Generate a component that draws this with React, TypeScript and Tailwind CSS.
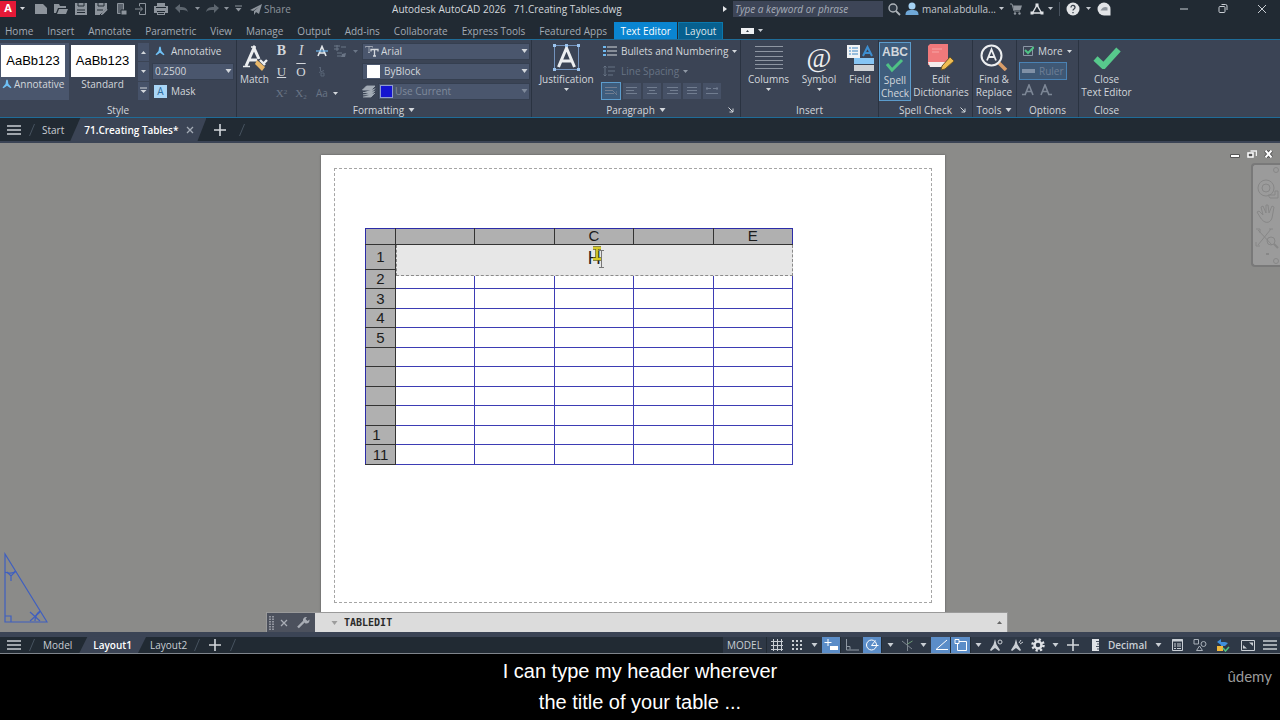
import React from "react";
import clsx from "clsx";

const menuTabs = [
  "Home",
  "Insert",
  "Annotate",
  "Parametric",
  "View",
  "Manage",
  "Output",
  "Add-ins",
  "Collaborate",
  "Express Tools",
  "Featured Apps",
];

const columns = ["", "", "C", "", "E"];
const rows = ["2", "3", "4", "5", "", "", "", "", "1  ", "11"];

type IconProps = {
  w?: number;
  h?: number;
  className?: string;
  children: React.ReactNode;
};

const Icon = ({ w = 16, h = 16, className, children }: IconProps) => (
  <svg
    width={w}
    height={h}
    viewBox={`0 0 ${w} ${h}`}
    fill="none"
    stroke="currentColor"
    className={clsx("shrink-0", className)}
    aria-hidden="true"
  >
    {children}
  </svg>
);

const Caret = ({ className }: { className?: string }) => (
  <Icon w={7} h={4} className={className}>
    <path d="M0.5 0h6L3.5 4z" fill="currentColor" stroke="none" />
  </Icon>
);

const SmallCaret = ({ className }: { className?: string }) => (
  <Icon w={5} h={3} className={className}>
    <path d="M0 0h5L2.5 3z" fill="currentColor" stroke="none" />
  </Icon>
);

const Slash = () => (
  <Icon w={8} h={14} className="text-[#46525f]">
    <path d="M1.5 13L6.5 1" />
  </Icon>
);

const Burger = () => (
  <Icon w={14} h={12} className="text-[#c9ced4]">
    <path d="M0 2h14M0 6h14M0 10h14" strokeWidth="1.6" />
  </Icon>
);

const Plus = () => (
  <Icon w={12} h={12} className="text-[#d3d7dc]">
    <path d="M6 0v12M0 6h12" strokeWidth="1.6" />
  </Icon>
);

const AnnoIcon = ({ className }: { className?: string }) => (
  <Icon w={10} h={10} className={className}>
    <path
      d="M5 0.5C6.2 0.5 6 3.5 6.5 5L9.5 8.5 8.5 9.2 5 6.8 1.5 9.2 0.5 8.5 3.5 5C4 3.5 3.8 0.5 5 0.5z"
      fill="currentColor"
      stroke="none"
    />
  </Icon>
);

type PanelProps = {
  title: string;
  className: string;
  caret?: boolean;
  launcher?: boolean;
  children: React.ReactNode;
};

const Panel = ({ title, className, caret, launcher, children }: PanelProps) => (
  <section
    className={clsx(
      "flex shrink-0 flex-col border-r border-[#2a3341]",
      className
    )}
  >
    <div className="flex h-16 pt-px">{children}</div>
    <div className="flex h-3 items-center leading-3">
      {launcher && <span className="w-3" />}
      <h2 className="flex flex-1 items-center justify-center gap-1">
        {title}
        {caret && <Caret />}
      </h2>
      {launcher && (
        <button className="w-3" aria-label={`${title} settings`}>
          <Icon w={6} h={6}>
            <path d="M0.5 0.5L5 5M5 1.5V5H1.5" />
          </Icon>
        </button>
      )}
    </div>
  </section>
);

type BigButtonProps = {
  className: string;
  lines: string[];
  caret?: boolean;
  children: React.ReactNode;
};

const BigButton = ({ className, lines, caret, children }: BigButtonProps) => (
  <button
    className={clsx(
      "flex h-[59px] shrink-0 flex-col items-center pt-px leading-[13px]",
      className
    )}
  >
    <span className="flex h-[31px] items-center">{children}</span>
    {lines.map((line) => (
      <span key={line} className="whitespace-nowrap">
        {line}
      </span>
    ))}
    {caret && <SmallCaret className="mt-0.5" />}
  </button>
);

type SelectBoxProps = {
  label: string;
  value: string;
  className?: string;
  children?: React.ReactNode;
};

const SelectBox = ({ label, value, className, children }: SelectBoxProps) => (
  <label
    className={clsx(
      "flex h-[17px] items-center border border-[#353f50] bg-[#4a566d] pr-px",
      className
    )}
  >
    {children}
    <select
      aria-label={label}
      className="min-w-0 flex-1 appearance-none bg-transparent pl-0.5 outline-none"
    >
      <option>{value}</option>
    </select>
    <Caret />
  </label>
);

const TitleBar = () => (
  <header className="flex h-[18px] items-center pb-px text-[#8d949c]">
    <button
      aria-label="Application menu"
      className="flex h-4 w-4 items-start bg-[#e51937] text-[11px] leading-[14px] font-bold text-white"
    >
      <span className="w-full text-center">A</span>
    </button>
    <SmallCaret className="ml-1 text-[#d3d7dc]" />
    <div className="ml-2 flex items-center gap-1">
      <Icon>
        <path d="M2 3h8l4 4v6H2z" fill="currentColor" stroke="none" />
      </Icon>
      <Icon>
        <path
          d="M1 3h5l1 2h6v2H5L3 12H1zM6 8h9l-2 5H4z"
          fill="currentColor"
          stroke="none"
        />
      </Icon>
      <Icon>
        <path d="M2 2h12v12H2z" fill="currentColor" stroke="none" />
        <path d="M5 2v3h6V2M4 9h8M4 11.5h8" stroke="#212a33" />
      </Icon>
      <Icon>
        <path d="M2 2h12v6l-5 6H2z" fill="currentColor" stroke="none" />
        <path d="M5 2v3h6V2M4 9h6M7 14l6-6" stroke="#212a33" />
        <path d="M9 13l5-5" strokeWidth="2" />
      </Icon>
      <Icon>
        <path d="M4.5 2.5h6v10h-6z" fill="#59616b" />
        <path d="M8 9h6v5H8z" fill="currentColor" stroke="#212a33" />
      </Icon>
      <Icon>
        <path d="M6.5 5V2.5h6v11h-6V11M2 8h7M7 5.5L9.5 8 7 10.5" />
      </Icon>
      <Icon>
        <path
          d="M4 2h8v3h3v7h-3v2H4v-2H1V5h3z"
          fill="currentColor"
          stroke="none"
        />
        <path d="M3 6.5h10M4 10.5h8M5 12.5h6" stroke="#212a33" />
      </Icon>
    </div>
    <Icon w={14} h={10} className="ml-1.5 text-[#5d666f]">
      <path d="M0 4l5-4v3c5 0 7 1 8 5-2-2-4-2-8-2v3z" fill="currentColor" stroke="none" />
    </Icon>
    <SmallCaret className="ml-1.5" />
    <Icon w={14} h={10} className="ml-1.5 text-[#5d666f]">
      <path d="M13 4L8 0v3C3 3 1 4 0 8c2-2 4-2 8-2v3z" fill="currentColor" stroke="none" />
    </Icon>
    <SmallCaret className="ml-1" />
    <Icon w={7} h={7} className="ml-1.5">
      <path d="M0 1h7" />
      <path d="M0.5 3h6L3.5 6.5z" fill="currentColor" stroke="none" />
    </Icon>
    <button className="ml-2 flex items-center gap-0.5 leading-4">
      <Icon w={12} h={12}>
        <path d="M0 7L12 1 9 11 6 9 4 12V8l5-4-6 4z" fill="currentColor" stroke="none" />
      </Icon>
      Share
    </button>
    <h1 className="flex flex-1 justify-center gap-2 text-[#d3d7dc]">
      <span>Autodesk AutoCAD 2026</span>
      <span>71.Creating Tables.dwg</span>
    </h1>
    <Icon w={4} h={6} className="mr-1.5 text-[#e4e6e9]">
      <path d="M0 0l4 3-4 3z" fill="currentColor" stroke="none" />
    </Icon>
    <input
      aria-label="Search"
      placeholder="Type a keyword or phrase"
      className="h-4 w-[150px] bg-[#3d4557] px-0.5 italic outline-none placeholder:text-[#a7adb8]"
    />
    <Icon w={14} h={14} className="ml-1 text-[#aeb4ba]">
      <circle cx="6" cy="6" r="4" fill="#2f3944" strokeWidth="1.4" />
      <path d="M9 9l4 4" strokeWidth="1.8" />
    </Icon>
    <button className="ml-1 flex items-center gap-[3px] text-[#c3c8ce]">
      <Icon w={14} h={13}>
        <circle cx="7" cy="4" r="3.5" fill="#a5d3f5" stroke="none" />
        <path d="M0.5 13c0-4 2-5 6.5-5s6.5 1 6.5 5z" fill="#6fa8d8" stroke="none" />
      </Icon>
      manal.abdulla...
      <SmallCaret />
    </button>
    <Icon w={12} h={12} className="ml-1.5">
      <path d="M0 1h2l2 7h6" />
      <path d="M3 2.5h9L10.5 7H4z" fill="currentColor" stroke="none" />
      <circle cx="5" cy="10.5" r="1.2" fill="currentColor" stroke="none" />
      <circle cx="9.5" cy="10.5" r="1.2" fill="currentColor" stroke="none" />
    </Icon>
    <Icon w={14} h={12} className="ml-2 text-[#dfe2e6]">
      <path d="M7 2L2.5 10h9z" strokeWidth="1.4" />
      <path d="M5.5 0.5h3v3h-3zM0.5 8.5h3v3h-3zM10.5 8.5h3v3h-3z" fill="currentColor" stroke="none" />
    </Icon>
    <SmallCaret className="ml-1 text-[#c3c8ce]" />
    <span className="mx-1.5 h-3.5 w-px bg-[#48525e]" />
    <button aria-label="Help">
      <Icon w={14} h={14}>
        <circle cx="7" cy="7" r="6.5" fill="#e2e4e7" stroke="none" />
        <path d="M5 5.5c0-3 4-2.5 4 0C9 7 7 7 7 8.5M7 10v1.2" stroke="#3a424c" strokeWidth="1.3" />
      </Icon>
    </button>
    <SmallCaret className="ml-1.5 text-[#c3c8ce]" />
    <Icon w={14} h={14} className="ml-1.5">
      <path d="M7 0.5a6.5 6.5 0 016.5 6.5v6.5H7A6.5 6.5 0 017 0.5z" fill="#e2e4e7" stroke="none" />
      <path d="M3.5 8.5c2-4 5-4 7-3v3z" fill="#8d949c" stroke="none" />
    </Icon>
    <div className="mr-3 ml-17 flex items-center gap-7 text-[#c9ced4]">
      <button aria-label="Minimize">
        <Icon w={11} h={10}>
          <path d="M1 5h8" />
        </Icon>
      </button>
      <button aria-label="Restore">
        <Icon w={11} h={10}>
          <rect x="1" y="2.5" width="6" height="6" rx="1" />
          <path d="M3.5 0.5H7.5a1.5 1.5 0 011.5 1.5V6" />
        </Icon>
      </button>
      <button aria-label="Close">
        <Icon w={11} h={10}>
          <path d="M1 1l8 8M9 1L1 9" />
        </Icon>
      </button>
    </div>
  </header>
);

const MenuTabs = () => (
  <nav className="flex h-[21px] items-end text-[#a3abb5]">
    <div className="flex h-[17px] items-center gap-3.5 pr-[7px] pl-[5px]">
      {menuTabs.map((tab) => (
        <button key={tab}>{tab}</button>
      ))}
    </div>
    <button className="h-[17px] w-[63px] bg-[#0a85d1] text-white">
      Text Editor
    </button>
    <button className="ml-px h-[17px] w-[45px] border border-b-0 border-[#0a78ad] bg-[#07608f] text-[#dfe6ec]">
      Layout
    </button>
    <button
      aria-label="Ribbon display"
      className="ml-4.5 flex h-[17px] items-center gap-1 text-[#c9ced4]"
    >
      <Icon w={13} h={6}>
        <path d="M0 0h13v6H0z" fill="#eef0f2" stroke="none" />
        <path d="M5 4h3L6.5 2z" fill="#333c47" stroke="none" />
      </Icon>
      <SmallCaret />
    </button>
  </nav>
);

const StylePanel = () => (
  <Panel title="Style" className="w-[237px]">
    <button className="mt-0.5 flex h-[57px] w-[69px] flex-col bg-[#4a566d] pt-0.5 leading-[14px]">
      <span className="ml-px flex h-8 w-16 items-center justify-center bg-white font-['Liberation_Sans',sans-serif] text-[13px] text-black">
        AaBb123
      </span>
      <span className="flex items-center gap-0.5 pl-0.5">
        <AnnoIcon className="text-[#6fc0f5]" />
        Annotative
      </span>
    </button>
    <button className="mt-0.5 flex h-[57px] w-[67px] flex-col items-center pt-0.5 leading-[14px]">
      <span className="flex h-8 w-16 items-center justify-center bg-white font-['Liberation_Sans',sans-serif] text-[13px] text-black">
        AaBb123
      </span>
      Standard
    </button>
    <div className="mt-0.5 ml-0.5 flex h-[57px] w-[11px] flex-col gap-px">
      <button
        aria-label="Previous style"
        className="flex flex-1 items-center justify-center bg-[#465269]"
      >
        <SmallCaret className="rotate-180" />
      </button>
      <button
        aria-label="Next style"
        className="flex flex-1 items-center justify-center bg-[#465269]"
      >
        <SmallCaret />
      </button>
      <button
        aria-label="All styles"
        className="flex flex-1 items-center justify-center bg-[#465269]"
      >
        <Icon w={7} h={7}>
          <path d="M0 1h7" />
          <path d="M0.5 3h6L3.5 6z" fill="currentColor" stroke="none" />
        </Icon>
      </button>
    </div>
    <div className="ml-[3px] flex w-[82px] flex-col">
      <button className="flex h-5 items-center gap-1.5 pl-[3px]">
        <AnnoIcon className="text-[#6fc0f5]" />
        Annotative
      </button>
      <div className="flex h-5 items-center">
        <SelectBox label="Text height" value="0.2500" className="w-full" />
      </div>
      <button className="flex h-5 items-center gap-1 pl-0.5">
        <span className="flex size-[13px] items-center justify-center bg-[#a9d6f7] text-[#2c6a9c]">
          A
        </span>
        Mask
      </button>
    </div>
  </Panel>
);

const FormattingPanel = () => (
  <Panel title="Formatting" className="w-[295px]" caret>
    <BigButton className="w-[35px]" lines={["Match"]}>
      <Icon w={26} h={26} className="text-[#eceef0]">
        <path d="M4 21L12 3l5 11M7 15h8" strokeWidth="3" />
        <path d="M1 21.5h7M9 2h5" strokeWidth="1.5" />
        <path d="M15 15l8 7-3 4-7-7z" fill="#e8b668" stroke="none" />
        <path d="M18 15l5 5M22 18l3-3" strokeWidth="2.4" />
      </Icon>
    </BigButton>
    <div className="grid w-[90px] grid-cols-[19px_20px_22px_29px] grid-rows-3 font-['Liberation_Serif',serif] text-[14px] *:h-5 *:leading-5">
      <button className="font-bold">B</button>
      <button className="italic">I</button>
      <button aria-label="Strikethrough" className="flex items-center justify-center">
        <Icon w={12} h={12} className="text-[#e4e7ea]">
          <path d="M2 11L6 1.5 10 11M3.5 8h5" strokeWidth="1.6" />
          <path d="M0 6h12" stroke="#6fb8ee" strokeWidth="1.2" />
        </Icon>
      </button>
      <button aria-label="Match paragraph" className="flex items-center gap-1.5 text-[#6b7687]">
        <Icon w={14} h={14}>
          <path d="M1 2h6M1 5h5M4 1v6M8 3h5M4 9h5M4 12h4" />
          <path d="M9 10l4-1-1 4H8z" fill="currentColor" stroke="none" />
        </Icon>
        <SmallCaret />
      </button>
      <button className="text-[13px] underline">U</button>
      <button className="text-[13px] overline">O</button>
      <button aria-label="Stack" className="flex items-center justify-center text-[#596577]">
        <Icon w={8} h={10}>
          <path d="M2.5 0v4M1 1L2.5 0M3 6h3v3H3zM1 5.5l5-2" />
        </Icon>
      </button>
      <span />
      <button className="text-[11px] text-[#697485]">
        X<sup className="text-[7px]">2</sup>
      </button>
      <button className="text-[11px] text-[#697485]">
        X<sub className="text-[7px]">2</sub>
      </button>
      <button className="font-['Open_Sans',sans-serif] text-[10px] text-[#697485]">
        Aa
      </button>
      <span className="flex items-center">
        <SmallCaret />
      </span>
    </div>
    <div className="flex w-[168px] flex-col *:flex *:h-5 *:items-center">
      <div>
        <SelectBox label="Font" value="Arial" className="w-full">
          <Icon w={14} h={12} className="ml-0.5">
            <path d="M0.5 2.5v-1h7v1M4 1.5v6M3 7.5h2" strokeOpacity="0.6" />
            <path d="M6 6.5v-2h7v2M9.5 4.5v6.5M8 11h3" strokeWidth="1.3" />
          </Icon>
        </SelectBox>
      </div>
      <div>
        <SelectBox label="Color" value="ByBlock" className="w-full">
          <span className="mr-0.5 ml-1 size-[13px] bg-white" />
        </SelectBox>
      </div>
      <div className="text-[#7f8a9b]">
        <Icon w={14} h={13} className="mr-0.5">
          <path d="M4.5 1h8.500l-4 4H0.5zM1 7.5h8l4-4M1 9.8h8l4-4M1 12h8l4-4" fill="#a3abb5" stroke="#a3abb5" strokeWidth="0.9" />
        </Icon>
        <SelectBox label="Layer" value="Use Current" className="flex-1">
          <span className="ml-px size-[13px] shrink-0 border border-[#8f9bd0] bg-[#1414d0]" />
        </SelectBox>
      </div>
    </div>
  </Panel>
);

const ParagraphPanel = () => (
  <Panel title="Paragraph" className="w-[209px]" caret launcher>
    <BigButton className="w-[69px]" lines={["Justification"]} caret>
      <Icon w={27} h={27} className="text-[#eceef0]">
        <path d="M1.5 1.5h24v24h-24z" stroke="#7393bd" />
        <path d="M5.5 23L13.5 4l8 19M8.5 17h10" strokeWidth="3" />
        <path d="M0 0h3v3H0zM24 0h3v3h-3zM0 24h3v3H0zM24 24h3v3h-3zM12 0h3v3h-3z" fill="#9cc4ee" stroke="none" />
      </Icon>
    </BigButton>
    <div className="flex flex-1 flex-col">
      <button className="flex h-5 items-center gap-1 pl-0.5 whitespace-nowrap">
        <Icon w={14} h={12}>
          <path d="M4 2h10M4 6h10M4 10h10" />
          <path d="M0 1h3v2H0zM0 5h3v2H0zM0 9h3v2H0z" fill="#6fb8ee" stroke="none" />
        </Icon>
        Bullets and Numbering
        <SmallCaret />
      </button>
      <button className="flex h-5 items-center gap-1 pl-0.5 text-[#677384]">
        <Icon w={14} h={12}>
          <path d="M5 2h7M5 6h7M5 10h5M2 1v10M0.5 2.5L2 1l1.5 1.5M0.5 9.5L2 11l1.5-1.5" />
        </Icon>
        Line Spacing
        <SmallCaret className="text-[#8f98a5]" />
      </button>
      <div className="flex h-5 items-center gap-0.5 text-[#717d90]">
        <button aria-label="Default" className="flex h-[18px] w-5 items-center justify-center border border-[#5c9ccc] bg-[#3e5c7c]">
          <Icon w={12} h={10}>
            <path d="M0 1.5h12M0 4.5h8M0 7.5h9M8 5l4 4M12 5v4" />
          </Icon>
        </button>
        <button aria-label="Left" className="flex h-4 w-[18px] items-center justify-center bg-[#465166]">
          <Icon w={12} h={10}>
            <path d="M0 1.5h11M0 4.5h8M0 7.5h11" />
          </Icon>
        </button>
        <button aria-label="Center" className="flex h-4 w-[18px] items-center justify-center bg-[#465166]">
          <Icon w={12} h={10}>
            <path d="M1 1.5h10M3 4.5h6M1 7.5h10" />
          </Icon>
        </button>
        <button aria-label="Right" className="flex h-4 w-[18px] items-center justify-center bg-[#465166]">
          <Icon w={12} h={10}>
            <path d="M1 1.5h11M4 4.5h8M1 7.5h11" />
          </Icon>
        </button>
        <button aria-label="Justify" className="flex h-4 w-[18px] items-center justify-center bg-[#465166]">
          <Icon w={12} h={10}>
            <path d="M1 1.5h10M1 4.5h10M1 7.5h10" />
          </Icon>
        </button>
        <button aria-label="Distribute" className="flex h-4 w-[18px] items-center justify-center bg-[#465166]">
          <Icon w={14} h={10}>
            <path d="M1 2.5h5M8 2.5h5M1 7.5h12M2 1v3M12 1v3" />
          </Icon>
        </button>
      </div>
    </div>
  </Panel>
);

const Ribbon = () => (
  <div className="flex h-[79px] overflow-hidden border-y border-[#1f6c98] bg-[#3b4455]">
    <StylePanel />
    <FormattingPanel />
    <ParagraphPanel />
    <Panel title="Insert" className="w-[138px]">
      <BigButton className="w-[55px]" lines={["Columns"]} caret>
        <Icon w={28} h={26} className="text-[#8e96a2]">
          <path d="M0 1.5h28M0 6.5h28M0 11.5h28M0 15.5h28M0 19.5h28M0 23.5h28" />
        </Icon>
      </BigButton>
      <BigButton className="w-[46px]" lines={["Symbol"]} caret>
        <span className="font-['Liberation_Serif',serif] text-[27px] leading-7 text-[#eceef0]">
          @
        </span>
      </BigButton>
      <BigButton className="w-[36px]" lines={["Field"]}>
        <Icon w={27} h={26}>
          <path d="M0 0h13v13H0z" fill="#f1f3f5" stroke="none" />
          <path d="M2 3h2M2 6h2M2 9h2M5 3h6M5 6h6M5 9h6" stroke="#3d86c4" />
          <path d="M16 11l4.5-9L25 11M17.5 8h6" stroke="#3d8ed0" strokeWidth="2" />
          <path d="M7 13h20v6H7z" fill="#86c5f4" stroke="none" />
          <path d="M7 20h20v6H7z" fill="#cfd2d5" stroke="none" />
        </Icon>
      </BigButton>
    </Panel>
    <Panel title="Spell Check" className="w-[94px]" launcher>
      <BigButton
        className="mt-px border border-[#5c9ccc] bg-[#3f5d7d] w-8"
        lines={["Spell", "Check"]}
      >
        <span className="flex flex-col items-center font-['Liberation_Sans',sans-serif] text-[12px] leading-3 font-bold">
          ABC
          <Icon w={20} h={15}>
            <path d="M2 6l5 6L17 2" stroke="#4fc285" strokeWidth="3" />
          </Icon>
        </span>
      </BigButton>
      <BigButton className="w-[60px]" lines={["Edit", "Dictionaries"]}>
        <Icon w={28} h={27}>
          <path d="M1 2l2-2h18v21H1z" fill="#f0797b" stroke="none" />
          <path d="M5 5h10M5 8h7" stroke="#f7a6a6" />
          <path d="M1 18h17v5H3z" fill="#f4eded" stroke="none" />
          <path d="M15 22l8-9 4 4-9 8-4 1z" fill="#f0bd52" stroke="#6b5526" />
        </Icon>
      </BigButton>
    </Panel>
    <Panel title="Tools" className="w-[44px]" caret>
      <BigButton className="w-[42px]" lines={["Find &", "Replace"]}>
        <Icon w={28} h={27} className="text-[#eceef0]">
          <path d="M19 19l7 7" stroke="#d99d68" strokeWidth="3.5" />
          <circle cx="11.5" cy="11.5" r="10" strokeWidth="2" />
          <path d="M7 16.5l4.5-11 4.5 11M8.5 13h6" strokeWidth="1.8" />
        </Icon>
      </BigButton>
    </Panel>
    <Panel title="Options" className="w-[62px]">
      <div className="flex w-full flex-col pl-0.5">
        <button className="flex h-5 items-center gap-1 pl-[3px]">
          <Icon w={12} h={12}>
            <path d="M1.5 1.5h9v9h-9z" stroke="#8b96a5" />
            <path d="M3 5l3 3 6-6" stroke="#4fc285" strokeWidth="2" />
          </Icon>
          More
          <SmallCaret />
        </button>
        <button className="mt-px flex h-[18px] w-[48px] items-center gap-1 border border-[#4a82b4] bg-[#3f5875] pl-0.5 text-[#6f7f95]">
          <Icon w={13} h={6}>
            <path d="M0 1h13v4H0z" fill="#8090a6" stroke="none" />
          </Icon>
          Ruler
        </button>
        <div className="flex h-5 items-center gap-1.5 pl-[3px] text-[#7d8796]">
          <Icon w={12} h={12}>
            <path d="M3 11l4-10 4 10M4.5 7.5h5M0 10.5h4" strokeWidth="1.6" />
          </Icon>
          <Icon w={12} h={12}>
            <path d="M1 11L5 1l4 10M2.5 7.5h5M8 10.5h4" strokeWidth="1.6" />
          </Icon>
        </div>
      </div>
    </Panel>
    <Panel title="Close" className="w-[55px] border-r-0">
      <BigButton className="w-[55px]" lines={["Close", "Text Editor"]}>
        <Icon w={28} h={22}>
          <path d="M2.5 11.5l8 7.5L25.5 2.5" stroke="#57c98c" strokeWidth="6" />
        </Icon>
      </BigButton>
    </Panel>
  </div>
);

const FileTabs = () => (
  <nav className="flex h-[25px] items-stretch border-b-2 border-[#3b4455] text-[#c9ced4]">
    <button aria-label="Files" className="flex w-7 items-center justify-center">
      <Burger />
    </button>
    <div className="flex items-center">
      <Slash />
    </div>
    <button className="px-1.5">Start</button>
    <div className="flex items-center gap-2 bg-[#3b4455] pr-3 pl-3.5 text-white [clip-path:polygon(10px_0,100%_0,calc(100%-9px)_100%,0_100%)]">
      <button className="font-semibold">71.Creating Tables*</button>
      <button aria-label="Close drawing" className="text-[#a3abb5]">
        <Icon w={8} h={8}>
          <path d="M1 1l6 6M7 1L1 7" strokeWidth="1.3" />
        </Icon>
      </button>
    </div>
    <button aria-label="New drawing" className="px-2">
      <Plus />
    </button>
    <div className="flex items-center pl-1">
      <Slash />
    </div>
  </nav>
);

const DrawingTable = () => (
  <table className="mt-[59px] ml-[30px] w-[428px] table-fixed border-collapse text-center font-['Liberation_Sans',sans-serif] text-[15px] leading-[15px] text-[#1c1c1c]">
    <thead>
      <tr className="h-4 bg-[#b0b0b0] leading-[14px]">
        <th className="w-[30px] border border-[#333] border-t-[#2c2ca8] border-l-[#2c2ca8]" />
        {columns.map((name, i) => (
          <th
            key={i}
            className="border border-[#333] border-t-[#2c2ca8] p-0 pb-px font-normal last:border-r-[#2c2ca8]"
          >
            {name}
          </th>
        ))}
      </tr>
    </thead>
    <tbody>
      <tr className="h-[25px]">
        <th className="border border-[#333] border-l-[#2c2ca8] bg-[#b0b0b0] p-0 pb-0.5 font-normal">
          1
        </th>
        <td colSpan={5} className="relative p-0">
          {/* in-place editor, taller than the cell it edits */}
          <input
            aria-label="Table title"
            defaultValue="H"
            className="absolute top-0 left-0 h-[31px] w-full border border-t-0 border-dashed border-[#8a8a8a] bg-[#e7e7e7] pb-1 text-center text-[18px] outline-none"
          />
          <Icon w={18} h={24} className="absolute top-0 left-[192px]">
            <path d="M5 3h8M9 3v11M5 14h8" stroke="#6e6a12" strokeWidth="3.5" />
            <path d="M5 3h8M9 3v11M5 14h8" stroke="#d6ca2a" strokeWidth="1.8" />
            <path d="M11 5.500h5M13.500 6v16M11 22.500h5" stroke="#777" />
          </Icon>
        </td>
      </tr>
      {rows.map((name, i) => (
        <tr key={i} className="odd:h-5 even:h-[19px]">
          <th className="border border-[#333] border-l-[#2c2ca8] bg-[#b0b0b0] p-0 pb-px font-normal whitespace-pre">
            {name}
          </th>
          {columns.map((_, j) => (
            <td key={j} className="border border-[#3d3db4] p-0" />
          ))}
        </tr>
      ))}
    </tbody>
  </table>
);

const CommandLine = () => (
  <div className="absolute inset-x-0 bottom-0 flex justify-center pr-1.5">
    <div className="flex h-5 w-[742px] border border-b-0 border-[#9a9a9a] bg-[#dcdcdc]">
      <div className="flex w-12 items-center gap-1.5 bg-[#4c515d] pl-0.5 text-[#a9adb5]">
        <Icon w={5} h={14}>
          <path d="M1 0v14M4 0v14" strokeDasharray="1.5 1" strokeWidth="1.5" />
        </Icon>
        <button aria-label="Close command line">
          <Icon w={8} h={8}>
            <path d="M1 1l6 6M7 1L1 7" strokeWidth="1.3" />
          </Icon>
        </button>
        <button aria-label="Customize" className="ml-0.5">
          <Icon w={14} h={13}>
            <path d="M2 11.5l6-6" strokeWidth="2.4" />
            <path
              d="M13.500 3.500l-2 1.500-2-2L11 1C8.500 0.500 6.500 2.500 7 5l2.500 2.500C12 8 14 6 13.500 3.500z"
              fill="currentColor"
              stroke="none"
            />
          </Icon>
        </button>
      </div>
      <Caret className="mt-2 ml-4 text-[#9c9c9c]" />
      <input
        aria-label="Command"
        defaultValue="TABLEDIT"
        className="min-w-0 flex-1 bg-transparent px-1.5 font-['DejaVu_Sans_Mono',monospace] text-[10px] font-bold text-[#2b2b2b] outline-none"
      />
      <button aria-label="History" className="flex w-4 items-center justify-center text-[#666]">
        <SmallCaret className="rotate-180" />
      </button>
    </div>
  </div>
);

const Canvas = () => (
  <main className="relative flex flex-1 justify-center overflow-hidden bg-[#8b8b89] pt-3 pr-3.5 pb-4">
    <div className="h-[461px] w-[624px] bg-white p-[13px] shadow-[0_0_2px_#555]">
      <div className="h-full border border-dashed border-[#a5a5a5]">
        <DrawingTable />
      </div>
    </div>

    <Icon w={48} h={72} className="absolute bottom-2 left-0 text-[#3f5fc0]">
      <path d="M5 2v68h42zM5 64h6v6M5 20c5 2 9 1 11-1M35 69c0-4 2-8 5-10" strokeWidth="1.2" />
      <path d="M7 20l4 4 5-5M11 24v5M30 60l10 9M40 60l-10 9" strokeWidth="1.2" />
    </Icon>

    <div className="absolute top-[7px] right-1.5 flex gap-[7px] text-white">
      <Icon w={10} h={8}>
        <path d="M0.5 4.500h9v3h-9z" fill="white" stroke="#555" />
      </Icon>
      <Icon w={10} h={8}>
        <path d="M3.500 1h6v5" stroke="#eee" strokeWidth="1.500" />
        <path d="M1 3h5v4H1z" fill="#555" stroke="#fff" strokeWidth="1.5" />
      </Icon>
      <Icon w={10} h={8}>
        <path d="M1.5 0.5l6 7M7.5 0.5l-6 7" stroke="#555" strokeWidth="4" />
        <path d="M1.5 0.5l6 7M7.5 0.5l-6 7" strokeWidth="2" />
      </Icon>
    </div>

    <div className="absolute top-5 right-0 flex h-[104px] w-[29px] flex-col items-center justify-center rounded-l-sm border-2 border-r-0 border-[#797979] bg-[#9b9b9b] text-[#878787]">
      <Icon w={26} h={98}>
        <circle cx="22" cy="4" r="2.5" />
        <circle cx="12" cy="22" r="8" />
        <circle cx="12" cy="22" r="4" />
        <path d="M14 29h7v-4h3v7h-8z" />
        <path d="M6 51l-3-5 2-1 4 4-2-8 2-1 3 7v-8h2l1 8 3-7 2 1-2 11c-2 6-8 6-12-1z" />
        <path d="M4 64l14 15M17 63L4 79M2 63h4v4M15 63h4M2 76v4h4" />
        <circle cx="17" cy="75" r="4" />
        <path d="M20 78l4 4M12 88h3" strokeWidth="2" />
        <circle cx="22" cy="95" r="2.5" />
      </Icon>
    </div>

    <CommandLine />
  </main>
);

type ToolProps = {
  label: string;
  className: string;
  on?: boolean;
  children: React.ReactNode;
};

const Tool = ({ label, className, on, children }: ToolProps) => (
  <button
    aria-label={label}
    className={clsx(
      "flex shrink-0 items-center justify-center",
      on && "border-r border-[#212a33] bg-[#5b8dc8] text-white",
      className
    )}
  >
    {children}
  </button>
);

const StatusBar = () => (
  <footer className="flex h-[22px] items-stretch border-t-5 border-b border-t-[#3b4455] border-b-[#7f858c] text-[#c9ced4]">
    <button aria-label="Layouts" className="flex w-7 items-center justify-center">
      <Burger />
    </button>
    <div className="flex items-center">
      <Slash />
    </div>
    <button className="px-[7px]">Model</button>
    <button className="bg-[#3b4455] px-3.5 font-semibold text-white [clip-path:polygon(8px_0,100%_0,calc(100%-8px)_100%,0_100%)]">
      Layout1
    </button>
    <button className="pr-1.5 pl-1">Layout2</button>
    <div className="flex items-center gap-2">
      <Slash />
      <button aria-label="New layout">
        <Plus />
      </button>
      <Slash />
    </div>
    <div className="ml-auto flex bg-[#2e3846]">
      <button className="w-[44px] border-r border-[#212a33] text-[10px]">MODEL</button>
      <Tool label="Grid" className="w-5">
        <Icon w={12} h={12}>
          <path d="M2.5 0v12M6.5 0v12M10.5 0v12M0 2.5h12M0 6.5h12M0 10.5h12" />
        </Icon>
      </Tool>
      <Tool label="Snap" className="w-5">
        <Icon w={12} h={12}>
          <path d="M1 2h12M1 6h12M1 10h12" strokeWidth="2" strokeDasharray="2 2" />
        </Icon>
      </Tool>
      <Tool label="Snap options" className="w-[15px]">
        <Caret />
      </Tool>
      <Tool label="Dynamic input" className="w-[19px]" on>
        <Icon w={14} h={12}>
          <path d="M4 0v7M0.5 3.5h7" />
          <path d="M6 7h8v4H6z" fill="white" stroke="none" />
        </Icon>
      </Tool>
      <Tool label="Ortho" className="w-[22px]">
        <Icon w={14} h={12} className="text-[#8f98a3]">
          <path d="M1.5 0v11H14M1.5 7.5h3.5v3" />
        </Icon>
      </Tool>
      <Tool label="Polar tracking" className="w-[19px]" on>
        <Icon w={14} h={12}>
          <circle cx="6.5" cy="6" r="5" />
          <path d="M6.5 6.5h7M6.5 6.5l4-5" />
        </Icon>
      </Tool>
      <Tool label="Polar options" className="w-4">
        <Caret />
      </Tool>
      <Tool label="Isometric" className="w-[18px]">
        <Icon w={12} h={12} className="text-[#7d8690]">
          <path d="M6.5 0v12M1 2l10 8" />
          <path d="M6.5 5l5-3" stroke="#6f9c78" />
        </Icon>
      </Tool>
      <Tool label="Isometric options" className="w-[15px]">
        <Caret />
      </Tool>
      <Tool label="Object snap tracking" className="w-5" on>
        <Icon w={14} h={12}>
          <path d="M13 1L2 10.5h12" />
        </Icon>
      </Tool>
      <Tool label="Object snap" className="w-5" on>
        <Icon w={14} h={12}>
          <path d="M3.5 2.5h9v9h-9z" />
          <path d="M1 0.5h4v4H1z" fill="#5b8dc8" />
        </Icon>
      </Tool>
      <Tool label="Object snap options" className="w-[14px]">
        <Caret />
      </Tool>
      <Tool label="Annotation visibility" className="w-[22px]">
        <Icon w={14} h={12}>
          <path d="M6 0l1.500 5.500L11 11l-1 1-4-3-4 3-1-1 3.500-5.500z" fill="currentColor" stroke="none" />
          <circle cx="11" cy="3" r="2" />
        </Icon>
      </Tool>
      <Tool label="Auto scale" className="w-5">
        <Icon w={14} h={12}>
          <path d="M6 0l1.500 5.500L11 11l-1 1-4-3-4 3-1-1 3.500-5.500z" fill="currentColor" stroke="none" />
          <path d="M9 4l2-3M10 5l3-2" />
        </Icon>
      </Tool>
      <Tool label="Workspace" className="w-[22px]">
        <Icon w={14} h={14} className="text-[#dfe2e6]">
          <circle cx="7" cy="7" r="3.5" strokeWidth="2.5" />
          <circle cx="7" cy="7" r="5.5" strokeWidth="2.5" strokeDasharray="2.2 2.12" />
        </Icon>
      </Tool>
      <Tool label="Workspace options" className="w-3">
        <Caret />
      </Tool>
      <Tool label="Annotation monitor" className="w-[23px]">
        <Plus />
      </Tool>
      <Tool label="Units" className="w-[22px]">
        <Icon w={7} h={12}>
          <path d="M0 0h7v12H0z" fill="#dfe2e6" stroke="none" />
          <path d="M4 2.5h3M5 5h2M4 7.5h3M5 10h2" stroke="#4a5463" />
        </Icon>
      </Tool>
      <label className="flex w-[60px] items-center pr-1">
        <select
          aria-label="Drawing units"
          className="w-full appearance-none bg-transparent pl-0.5 font-semibold outline-none"
        >
          <option>Decimal</option>
        </select>
        <Caret />
      </label>
      <Tool label="Quick properties" className="w-[22px]">
        <Icon w={11} h={12}>
          <path d="M0.5 0.5h10v11h-10z" />
          <path d="M0 1.5h11" strokeWidth="2" />
          <path d="M2 5h2M5 5h4M2 7h2M5 7h4M2 9.5h2M5 9.5h4" />
        </Icon>
      </Tool>
      <Tool label="Isolate objects" className="w-[23px]">
        <Icon w={14} h={14} className="text-[#a9b0b9]">
          <path d="M1 1.5h4.5V6H1zM3.5 12.5l3-4.5 3 4.500z" />
          <circle cx="10.5" cy="6" r="2.5" />
        </Icon>
      </Tool>
      <Tool label="Graphics performance" className="w-6">
        <Icon w={14} h={13}>
          <path d="M1 3l4-3v3h4l3 1-3 3H5V6z" fill="#3f8fdc" stroke="none" />
          <path d="M1 7h6v5H1z" fill="#f0b93c" stroke="none" />
          <path d="M7 9l2.5 3L13 8" stroke="#4fc285" strokeWidth="1.5" />
        </Icon>
      </Tool>
      <Tool label="Clean screen" className="w-[25px]">
        <Icon w={14} h={11}>
          <path d="M0.5 0.5h13v10h-13z" />
          <path d="M8 2.5h4V6zM6 8.5H2V5z" fill="currentColor" stroke="none" />
        </Icon>
      </Tool>
      <Tool label="Customization" className="w-5">
        <Burger />
      </Tool>
    </div>
  </footer>
);

const App = () => {
  return (
    <div className="flex min-h-screen flex-col bg-[#212a33] font-['Open_Sans',sans-serif] text-[10px] leading-4 text-[#d3d7dc]">
      <TitleBar />
      <MenuTabs />
      <Ribbon />
      <FileTabs />
      <Canvas />
      <StatusBar />
      <div className="grid grid-cols-[1fr_auto_1fr] bg-black pt-0.5 pb-0.5 text-white">
        <p className="col-start-2 text-center font-['Liberation_Sans',sans-serif] text-[20px] leading-[31px]">
          I can type my header wherever
          <br />
          the title of your table ...
        </p>
        <span className="mt-2.5 mr-2 justify-self-end font-['Lato',sans-serif] text-[15px] leading-5 text-[#9a9a9a]">
          ûdemy
        </span>
      </div>
    </div>
  );
};

export default App;
